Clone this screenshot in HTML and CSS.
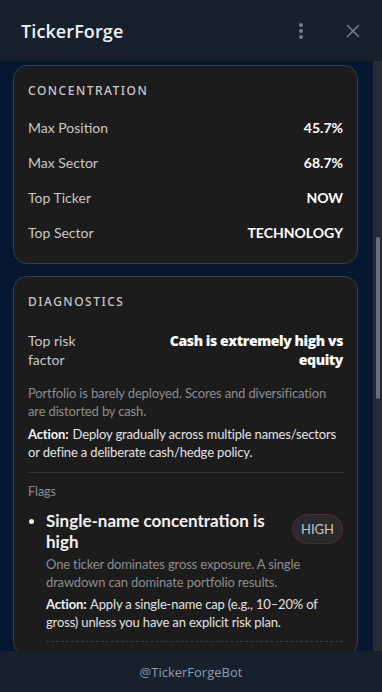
FILE: index.html
```html
<!DOCTYPE html>
<html lang="en">
<head>
<meta charset="utf-8">
<title>TickerForge</title>
<link rel="stylesheet" href="styles.css">
</head>
<body>
<div class="app">
  <header class="topbar">
    <div class="title">TickerForge</div>
    <div class="actions">
      <svg class="kebab" width="6" height="18" viewBox="0 0 6 18"><circle cx="3" cy="3" r="2" fill="#76818d"/><circle cx="3" cy="9" r="2" fill="#76818d"/><circle cx="3" cy="15" r="2" fill="#76818d"/></svg>
      <svg class="close" width="14" height="14" viewBox="0 0 14 14"><path d="M1.5 1.5L12.5 12.5M12.5 1.5L1.5 12.5" stroke="#76818d" stroke-width="1.5" stroke-linecap="round"/></svg>
    </div>
  </header>
  <main class="viewport">
    <div class="content">
      <section class="card">
        <h2 class="card-title">CONCENTRATION</h2>
        <div class="rows">
          <div class="row"><span class="label">Max Position</span><span class="value">45.7%</span></div>
          <div class="row"><span class="label">Max Sector</span><span class="value">68.7%</span></div>
          <div class="row"><span class="label">Top Ticker</span><span class="value">NOW</span></div>
          <div class="row"><span class="label">Top Sector</span><span class="value">TECHNOLOGY</span></div>
        </div>
      </section>
      <section class="card">
        <h2 class="card-title">DIAGNOSTICS</h2>
        <div class="risk">
          <span class="label risk-label">Top risk<br>factor</span>
          <span class="risk-value">Cash is extremely high vs equity</span>
        </div>
        <p class="muted">Portfolio is barely deployed. Scores and diversification are distorted by cash.</p>
        <p class="action"><b>Action:</b> Deploy gradually across multiple names/sectors or define a deliberate cash/hedge policy.</p>
        <div class="divider"></div>
        <div class="flags-label">Flags</div>
        <ul class="flags">
          <li class="flag">
            <div class="flag-head">
              <span class="flag-title">Single-name concentration is high</span>
              <span class="badge">HIGH</span>
            </div>
            <p class="muted">One ticker dominates gross exposure. A single drawdown can dominate portfolio results.</p>
            <p class="action"><b>Action:</b> Apply a single-name cap (e.g., 10–20% of gross) unless you have an explicit risk plan.</p>
          </li>
        </ul>
      </section>
    </div>
    <div class="scrollbar"><div class="thumb"></div></div>
  </main>
  <footer class="bottombar">@TickerForgeBot</footer>
</div>
</body>
</html>
```
FILE: styles.css
```css
* { box-sizing: border-box; }
html, body { margin: 0; padding: 0; }
body {
  width: 382px;
  height: 692px;
  overflow: hidden;
  background: #17212b;
  font-family: "Lato", "Noto Sans", sans-serif;
}
.app {
  display: flex;
  flex-direction: column;
  height: 692px;
}
.topbar {
  height: 61px;
  flex: 0 0 61px;
  background: #17212b;
  display: flex;
  align-items: center;
  justify-content: space-between;
  padding: 0 22px 0 21px;
}
.title {
  font-family: "Open Sans", sans-serif;
  font-size: 18px;
  font-weight: 600;
  color: #eef2f6;
  letter-spacing: 0.1px;
}
.actions {
  display: flex;
  align-items: center;
  gap: 42px;
}
.kebab { display: block; }
.close { display: block; }
.viewport {
  flex: 1;
  min-height: 0;
  background: #061730;
  display: flex;
  overflow: hidden;
}
.content {
  flex: 1;
  padding: 4px 15px 0 13px;
  display: flex;
  flex-direction: column;
  gap: 12px;
}
.card {
  background: #1c1c1d;
  border: 1px solid #3b3d40;
  border-radius: 14px;
  padding: 17px 14px 13px 14px;
}
.card-title {
  margin: 0;
  font-family: "Noto Sans", sans-serif;
  font-size: 12px;
  font-weight: 500;
  letter-spacing: 1.5px;
  color: #c9c9c9;
  line-height: 16px;
}
.rows {
  margin-top: 11px;
  display: flex;
  flex-direction: column;
}
.row {
  display: flex;
  justify-content: space-between;
  align-items: center;
  height: 35px;
}
.label {
  font-size: 14px;
  color: #c8c8c8;
}
.value {
  font-size: 14px;
  font-weight: 700;
  color: #ffffff;
}
.risk {
  margin-top: 21px;
  display: flex;
  justify-content: space-between;
  line-height: 19px;
}
.risk-label { flex: 0 0 auto; }
.risk-value {
  text-align: right;
  font-family: "Open Sans", sans-serif;
  font-size: 14px;
  font-weight: 800;
  letter-spacing: -0.4px;
  color: #ffffff;
  width: 190px;
}
.muted {
  margin: 15px 0 0;
  font-size: 13px;
  line-height: 18px;
  letter-spacing: -0.15px;
  color: #8c8c8c;
}
.action {
  margin: 5px 0 0;
  font-size: 13px;
  line-height: 18px;
  letter-spacing: -0.15px;
  color: #e2e2e2;
}
.action b { font-weight: 700; color: #f2f2f2; margin-right: 1px; }
.divider {
  margin-top: 11px;
  height: 1px;
  background: #343436;
}
.flags-label {
  margin-top: 11px;
  font-size: 12.5px;
  color: #8c8c8c;
  line-height: 16px;
}
.flags {
  margin: 10px 0 0;
  padding: 0 0 0 18px;
  color: #f0f0f0;
}
.flag { padding-bottom: 10px; border-bottom: 1px dashed #3a3a3c; }
.flag::marker { font-size: 15px; }
.flag-head {
  display: flex;
  justify-content: space-between;
  align-items: flex-start;
  gap: 12px;
}
.flag-title {
  font-size: 17px;
  font-weight: 700;
  line-height: 21px;
  color: #f2f2f2;
}
.badge {
  flex: 0 0 auto;
  margin-top: 4px;
  padding: 0 8px;
  height: 30px;
  line-height: 28px;
  border-radius: 15px;
  border: 1px solid #5a2830;
  background: #2a2a2c;
  color: #c4c4c4;
  font-size: 13px;
}
.flag .muted { margin-top: 3px; }
.flag .action { margin-top: 4px; }
.scrollbar {
  flex: 0 0 9px;
  background: #262b33;
  padding: 0 2px 0 3px;
}
.thumb {
  margin-top: 176px;
  height: 162px;
  width: 4px;
  border-radius: 2px;
  background: #6b7078;
}
.bottombar {
  flex: 0 0 41px;
  height: 41px;
  background: #17212b;
  display: flex;
  align-items: center;
  justify-content: center;
  font-family: "Open Sans", sans-serif;
  font-size: 13px;
  color: #8d9bab;
}
```
